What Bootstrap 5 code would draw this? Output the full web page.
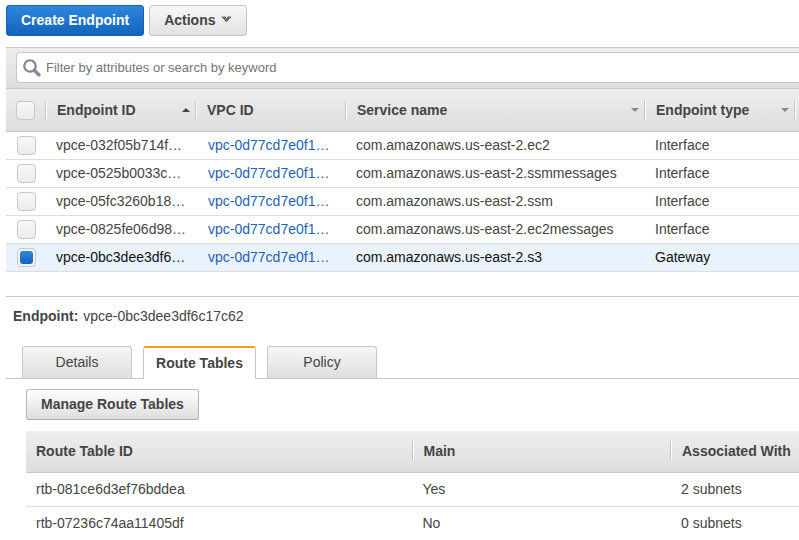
<!DOCTYPE html>
<html lang="en">
<head>
<meta charset="utf-8">
<meta name="viewport" content="width=device-width, initial-scale=1">
<title>Endpoints</title>
<link href="https://cdn.jsdelivr.net/npm/bootstrap@5.3.0/dist/css/bootstrap.min.css" rel="stylesheet">
<style>
body { font-family: "Liberation Sans", Arial, sans-serif; font-size: 14px; line-height: 20px; color: #444; background: #fff; }
.console { padding: 5px 0 0 6px; }
.toolbar { gap: 5px; }
.btn-console { font-size: 14px; line-height: 19px; font-weight: 700; padding: 5px 14px; border-radius: 3px; color: #444; border: 1px solid #c4c4c4; background: linear-gradient(#f8f8f8, #e2e2e2); }
.btn-create { color: #fff; border-color: #1a5fae; background: linear-gradient(#2e86de, #1363ba); }
.btn-manage { border-color: #bbb #b5b5b5 #aaa; background: linear-gradient(#fff, #dedede); }
.filter-bar { margin-top: 11px; padding: 4px 0 5px 10px; border: solid #c8c8c8; border-width: 1px 0; background: linear-gradient(#eee, #dedede); }
.filter-box { height: 31px; padding-left: 6px; border: 1px solid #c8c8c8; border-right: 0; border-radius: 4px 0 0 4px; background: #fff; }
.filter-input { font-size: 13px; line-height: 20px; color: #444; padding: 0 0 0 5px; }
.filter-input::placeholder { color: #757575; opacity: 1; }
.grid-table { table-layout: fixed; width: 100%; border-collapse: separate; border-spacing: 0; }
.grid-table th { height: 43px; padding: 0 10px; background: linear-gradient(#eee, #dedede); border-bottom: 1px solid #c8c8c8; font-weight: 700; white-space: nowrap; }
.grid-table td { height: 28px; padding: 0 10px 2px; border-bottom: 1px solid #ddd; white-space: nowrap; }
.grid-table td a { color: #1f5fb4; text-decoration: none; padding-left: 2px; }
.grid-table .pick { padding: 0 0 0 10px; }
.split { display: flex; align-items: center; justify-content: space-between; height: 19px; margin-left: -11px; padding-left: 11px; border-left: 1px solid #c4c4c4; box-shadow: inset 1px 0 #fff; }
.grid-table .edge { padding: 0; }
.edge .split { margin-left: -1px; padding: 0; }
.grid-table th .arrow { margin-right: -4px; }
.selected td { background: #e9f2fd; color: #111; }
.tick { appearance: none; display: block; width: 19px; height: 19px; margin: 0; border: 1px solid #c8c8c8; border-radius: 4px; background: linear-gradient(#f8f8f8, #ebebeb); }
td .tick { margin-left: 1px; }
.tick:checked { padding: 2px; background: #f2f4f7; }
.tick:checked::before { content: ""; display: block; width: 13px; height: 13px; border-radius: 3px; background: linear-gradient(#2e86de, #1363ba); }
.details-pane { margin-top: 24px; border-top: 1px solid #c8c8c8; }
.pane-title { font-size: 14px; line-height: 20px; padding: 9px 7px 0; }
.pane-title strong { margin-right: 1px; }
.tab-strip { gap: 11px; margin-top: 20px; padding-left: 16px; border-bottom: 1px solid #c8c8c8; align-items: flex-end; }
.tab-strip .tab-btn { width: 110px; height: 32px; padding: 0 0 2px; color: #444; border: 1px solid #c8c8c8; border-bottom: 0; border-radius: 3px 3px 0 0; background: linear-gradient(#f6f6f6, #dfdfdf); }
.tab-strip .tab-btn.active { width: 113px; height: 33px; margin-bottom: -1px; font-weight: 700; border-top: 2px solid #f39c1f; background: #fff; }
.pane-body { padding: 10px 0 0 20px; }
.routes { margin-top: 11px; }
.routes th { height: 42px; padding-bottom: 2px; }
.routes td { height: 34px; }
.routes td + td { padding-left: 10px; }
.routes tr:last-child td { border-bottom: 0; height: 33px; }
</style>
</head>
<body>
<main class="console">
  <div class="toolbar d-flex">
    <button type="button" class="btn btn-console btn-create">Create Endpoint</button>
    <button type="button" class="btn btn-console d-flex align-items-center">Actions
      <svg class="mb-1" width="17" height="6" viewBox="0 0 17 6" aria-hidden="true"><g transform="translate(1 0)"><path d="M6 .5h2.500l2 2.200 2-2.200H15v1L10.500 6 6 1.500z" fill="#8a8a8a"/><path d="M6.300 .8L10.500 5.300 14.700 .8M8.500 .5l2 2.200 2-2.200" fill="none" stroke="#444"/></g></svg>
    </button>
  </div>

  <div class="filter-bar">
    <label class="filter-box d-flex align-items-center">
      <svg class="flex-shrink-0" width="18" height="18" viewBox="0 0 18 18" aria-hidden="true"><circle cx="7" cy="7" r="5.700" fill="none" stroke="#8a8a8a" stroke-width="2.300"/><path d="M11.500 11.500l4.400 4.300" stroke="#8a8a8a" stroke-width="3.600" stroke-linecap="round"/></svg>
      <input type="search" class="filter-input form-control border-0 shadow-none bg-transparent" aria-label="Filter endpoints" placeholder="Filter by attributes or search by keyword">
    </label>
  </div>

  <table class="grid-table">
    <colgroup><col width="40"><col width="150"><col width="150"><col><col width="150"><col width="4"></colgroup>
    <thead>
      <tr>
        <th class="pick"><input type="checkbox" class="tick" aria-label="Select all"></th>
        <th><div class="split">Endpoint ID <svg class="arrow" width="8" height="4" viewBox="0 0 8 4" aria-hidden="true"><path d="M0 4l4-4 4 4z" fill="#444"/></svg></div></th>
        <th><div class="split">VPC ID</div></th>
        <th><div class="split">Service name <svg class="arrow" width="8" height="4" viewBox="0 0 8 4" aria-hidden="true"><path d="M0 0h8L4 4z" fill="#8a8a8a"/></svg></div></th>
        <th><div class="split">Endpoint type <svg class="arrow" width="8" height="4" viewBox="0 0 8 4" aria-hidden="true"><path d="M0 0h8L4 4z" fill="#8a8a8a"/></svg></div></th>
        <th class="edge"><div class="split"></div></th>
      </tr>
    </thead>
    <tbody>
      <tr><td class="pick"><input type="checkbox" class="tick" aria-label="Select vpce-032f05b714f"></td><td>vpce-032f05b714f…</td><td><a href="#">vpc-0d77cd7e0f1…</a></td><td>com.amazonaws.us-east-2.ec2</td><td>Interface</td><td class="edge"></td></tr>
      <tr><td class="pick"><input type="checkbox" class="tick" aria-label="Select vpce-0525b0033c"></td><td>vpce-0525b0033c…</td><td><a href="#">vpc-0d77cd7e0f1…</a></td><td>com.amazonaws.us-east-2.ssmmessages</td><td>Interface</td><td class="edge"></td></tr>
      <tr><td class="pick"><input type="checkbox" class="tick" aria-label="Select vpce-05fc3260b18"></td><td>vpce-05fc3260b18…</td><td><a href="#">vpc-0d77cd7e0f1…</a></td><td>com.amazonaws.us-east-2.ssm</td><td>Interface</td><td class="edge"></td></tr>
      <tr><td class="pick"><input type="checkbox" class="tick" aria-label="Select vpce-0825fe06d98"></td><td>vpce-0825fe06d98…</td><td><a href="#">vpc-0d77cd7e0f1…</a></td><td>com.amazonaws.us-east-2.ec2messages</td><td>Interface</td><td class="edge"></td></tr>
      <tr class="selected"><td class="pick"><input type="checkbox" class="tick" checked aria-label="Select vpce-0bc3dee3df6"></td><td>vpce-0bc3dee3df6…</td><td><a href="#">vpc-0d77cd7e0f1…</a></td><td>com.amazonaws.us-east-2.s3</td><td>Gateway</td><td class="edge"></td></tr>
    </tbody>
  </table>

  <section class="details-pane">
    <h2 class="pane-title fw-normal mb-0"><strong>Endpoint:</strong> vpce-0bc3dee3df6c17c62</h2>
    <div class="tab-strip d-flex" role="tablist">
      <button type="button" class="tab-btn" role="tab" aria-selected="false">Details</button>
      <button type="button" class="tab-btn active" role="tab" aria-selected="true">Route Tables</button>
      <button type="button" class="tab-btn" role="tab" aria-selected="false">Policy</button>
    </div>
    <div class="pane-body">
      <button type="button" class="btn btn-console btn-manage d-block">Manage Route Tables</button>
      <table class="grid-table routes">
        <colgroup><col width="50%"><col><col width="128"></colgroup>
        <thead><tr><th>Route Table ID</th><th><div class="split">Main</div></th><th class="pe-0"><div class="split">Associated With</div></th></tr></thead>
        <tbody>
          <tr><td>rtb-081ce6d3ef76bddea</td><td>Yes</td><td>2 subnets</td></tr>
          <tr><td>rtb-07236c74aa11405df</td><td>No</td><td>0 subnets</td></tr>
        </tbody>
      </table>
    </div>
  </section>
</main>
<script src="https://cdn.jsdelivr.net/npm/bootstrap@5.3.0/dist/js/bootstrap.bundle.min.js"></script>
</body>
</html>
